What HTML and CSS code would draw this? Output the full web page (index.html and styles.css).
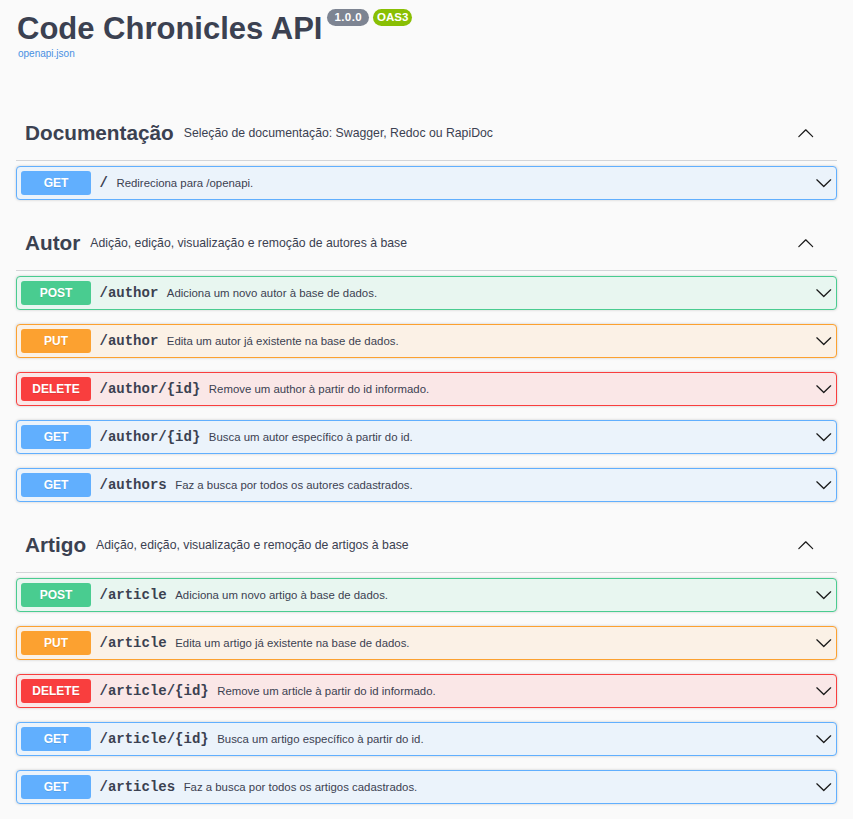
FILE: index.html
```html
<!DOCTYPE html>
<html lang="pt-BR">
<head>
<meta charset="utf-8">
<title>Code Chronicles API</title>
<link rel="stylesheet" href="styles.css">
</head>
<body>
<div class="page">
  <div class="info">
    <div class="title-row">
      <h1 class="title">Code Chronicles API</h1>
      <span class="badge badge-version">1.0.0</span>
      <span class="badge badge-oas">OAS3</span>
    </div>
    <a class="spec-link" href="#">openapi.json</a>
  </div>

  <section class="tag-section">
    <div class="tag-header">
      <div class="tag-text">
        <h3 class="tag-name">Documentação</h3>
        <span class="tag-desc">Seleção de documentação: Swagger, Redoc ou RapiDoc</span>
      </div>
      <svg class="arrow arrow-up" viewBox="0 0 20 20"><path d="M17.418 14.908c.272.268.709.268.979 0s.27-.701 0-.969l-7.908-7.83c-.27-.268-.707-.268-.979 0l-7.908 7.83c-.27.268-.27.701 0 .969.271.268.709.268.979 0L10 7.767l7.418 7.141z"/></svg>
    </div>
    <div class="opblock get">
      <span class="method">GET</span>
      <span class="path">/</span>
      <span class="summary">Redireciona para /openapi.</span>
      <svg class="arrow" viewBox="0 0 20 20"><path d="M17.418 6.109c.272-.268.709-.268.979 0s.271.701 0 .969l-7.908 7.83c-.27.268-.707.268-.979 0l-7.908-7.830c-.27-.268-.27-.701 0-.969.271-.268.709-.268.979 0L10 13.25l7.418-7.141z"/></svg>
    </div>
  </section>

  <section class="tag-section">
    <div class="tag-header">
      <div class="tag-text">
        <h3 class="tag-name">Autor</h3>
        <span class="tag-desc">Adição, edição, visualização e remoção de autores à base</span>
      </div>
      <svg class="arrow arrow-up" viewBox="0 0 20 20"><path d="M17.418 14.908c.272.268.709.268.979 0s.27-.701 0-.969l-7.908-7.83c-.27-.268-.707-.268-.979 0l-7.908 7.83c-.27.268-.27.701 0 .969.271.268.709.268.979 0L10 7.767l7.418 7.141z"/></svg>
    </div>
    <div class="opblock post">
      <span class="method">POST</span>
      <span class="path">/author</span>
      <span class="summary">Adiciona um novo autor à base de dados.</span>
      <svg class="arrow" viewBox="0 0 20 20"><path d="M17.418 6.109c.272-.268.709-.268.979 0s.271.701 0 .969l-7.908 7.83c-.27.268-.707.268-.979 0l-7.908-7.83c-.27-.268-.27-.701 0-.969.271-.268.709-.268.979 0L10 13.25l7.418-7.141z"/></svg>
    </div>
    <div class="opblock put">
      <span class="method">PUT</span>
      <span class="path">/author</span>
      <span class="summary">Edita um autor já existente na base de dados.</span>
      <svg class="arrow" viewBox="0 0 20 20"><path d="M17.418 6.109c.272-.268.709-.268.979 0s.271.701 0 .969l-7.908 7.83c-.27.268-.707.268-.979 0l-7.908-7.83c-.27-.268-.27-.701 0-.969.271-.268.709-.268.979 0L10 13.25l7.418-7.141z"/></svg>
    </div>
    <div class="opblock delete">
      <span class="method">DELETE</span>
      <span class="path">/author/{id}</span>
      <span class="summary">Remove um author à partir do id informado.</span>
      <svg class="arrow" viewBox="0 0 20 20"><path d="M17.418 6.109c.272-.268.709-.268.979 0s.271.701 0 .969l-7.908 7.83c-.27.268-.707.268-.979 0l-7.908-7.83c-.27-.268-.27-.701 0-.969.271-.268.709-.268.979 0L10 13.25l7.418-7.141z"/></svg>
    </div>
    <div class="opblock get">
      <span class="method">GET</span>
      <span class="path">/author/{id}</span>
      <span class="summary">Busca um autor específico à partir do id.</span>
      <svg class="arrow" viewBox="0 0 20 20"><path d="M17.418 6.109c.272-.268.709-.268.979 0s.271.701 0 .969l-7.908 7.83c-.27.268-.707.268-.979 0l-7.908-7.83c-.27-.268-.27-.701 0-.969.271-.268.709-.268.979 0L10 13.25l7.418-7.141z"/></svg>
    </div>
    <div class="opblock get">
      <span class="method">GET</span>
      <span class="path">/authors</span>
      <span class="summary">Faz a busca por todos os autores cadastrados.</span>
      <svg class="arrow" viewBox="0 0 20 20"><path d="M17.418 6.109c.272-.268.709-.268.979 0s.271.701 0 .969l-7.908 7.83c-.27.268-.707.268-.979 0l-7.908-7.83c-.27-.268-.27-.701 0-.969.271-.268.709-.268.979 0L10 13.25l7.418-7.141z"/></svg>
    </div>
  </section>

  <section class="tag-section">
    <div class="tag-header">
      <div class="tag-text">
        <h3 class="tag-name">Artigo</h3>
        <span class="tag-desc">Adição, edição, visualização e remoção de artigos à base</span>
      </div>
      <svg class="arrow arrow-up" viewBox="0 0 20 20"><path d="M17.418 14.908c.272.268.709.268.979 0s.27-.701 0-.969l-7.908-7.83c-.27-.268-.707-.268-.979 0l-7.908 7.83c-.27.268-.27.701 0 .969.271.268.709.268.979 0L10 7.767l7.418 7.141z"/></svg>
    </div>
    <div class="opblock post">
      <span class="method">POST</span>
      <span class="path">/article</span>
      <span class="summary">Adiciona um novo artigo à base de dados.</span>
      <svg class="arrow" viewBox="0 0 20 20"><path d="M17.418 6.109c.272-.268.709-.268.979 0s.271.701 0 .969l-7.908 7.83c-.27.268-.707.268-.979 0l-7.908-7.83c-.27-.268-.27-.701 0-.969.271-.268.709-.268.979 0L10 13.25l7.418-7.141z"/></svg>
    </div>
    <div class="opblock put">
      <span class="method">PUT</span>
      <span class="path">/article</span>
      <span class="summary">Edita um artigo já existente na base de dados.</span>
      <svg class="arrow" viewBox="0 0 20 20"><path d="M17.418 6.109c.272-.268.709-.268.979 0s.271.701 0 .969l-7.908 7.83c-.27.268-.707.268-.979 0l-7.908-7.83c-.27-.268-.27-.701 0-.969.271-.268.709-.268.979 0L10 13.25l7.418-7.141z"/></svg>
    </div>
    <div class="opblock delete">
      <span class="method">DELETE</span>
      <span class="path">/article/{id}</span>
      <span class="summary">Remove um article à partir do id informado.</span>
      <svg class="arrow" viewBox="0 0 20 20"><path d="M17.418 6.109c.272-.268.709-.268.979 0s.271.701 0 .969l-7.908 7.83c-.27.268-.707.268-.979 0l-7.908-7.83c-.27-.268-.27-.701 0-.969.271-.268.709-.268.979 0L10 13.25l7.418-7.141z"/></svg>
    </div>
    <div class="opblock get">
      <span class="method">GET</span>
      <span class="path">/article/{id}</span>
      <span class="summary">Busca um artigo específico à partir do id.</span>
      <svg class="arrow" viewBox="0 0 20 20"><path d="M17.418 6.109c.272-.268.709-.268.979 0s.271.701 0 .969l-7.908 7.83c-.27.268-.707.268-.979 0l-7.908-7.83c-.27-.268-.27-.701 0-.969.271-.268.709-.268.979 0L10 13.25l7.418-7.141z"/></svg>
    </div>
    <div class="opblock get">
      <span class="method">GET</span>
      <span class="path">/articles</span>
      <span class="summary">Faz a busca por todos os artigos cadastrados.</span>
      <svg class="arrow" viewBox="0 0 20 20"><path d="M17.418 6.109c.272-.268.709-.268.979 0s.271.701 0 .969l-7.908 7.83c-.27.268-.707.268-.979 0l-7.908-7.83c-.27-.268-.27-.701 0-.969.271-.268.709-.268.979 0L10 13.25l7.418-7.141z"/></svg>
    </div>
  </section>
</div>
</body>
</html>
```
FILE: styles.css
```css
* { box-sizing: border-box; }

html, body {
  margin: 0;
  background: #fafafa;
}

body {
  font-family: "Liberation Sans", Arial, sans-serif;
  color: #3b4151;
}

.page {
  padding: 0 16px;
}

.info {
  padding-top: 9px;
  margin-bottom: 44px;
}

.title-row {
  display: flex;
  align-items: flex-start;
}

.title {
  margin: 0;
  font-size: 31px;
  line-height: 39px;
  font-weight: 700;
  color: #3b4151;
  padding-left: 1px;
}

.badge {
  display: inline-block;
  height: 17px;
  line-height: 17px;
  border-radius: 57px;
  color: #fff;
  font-size: 11.5px;
  font-weight: 700;
  padding: 0 4px;
}

.badge-version {
  margin-left: 5px;
  background: #7d8492;
  padding: 0 7px;
  letter-spacing: 0.4px;
}

.badge-oas {
  margin-left: 4px;
  background: #89bf04;
}

.spec-link {
  display: block;
  margin-left: 2px;
  font-size: 10px;
  line-height: 12px;
  color: #4990e2;
  text-decoration: none;
}

.tag-header {
  display: flex;
  align-items: center;
  justify-content: space-between;
  height: 57px;
  padding: 1px 23px 0 9px;
  margin-bottom: 5px;
  border-bottom: 1px solid rgba(59, 65, 81, 0.2);
}

.tag-text {
  display: flex;
  align-items: center;
}

.tag-name {
  margin: 0;
  font-size: 20.75px;
  font-weight: 700;
  color: #3b4151;
}

.tag-desc {
  margin-left: 10px;
  font-size: 12.25px;
  color: #3b4151;
}

.arrow {
  width: 17.5px;
  height: 17.5px;
  flex: none;
  fill: #1a1a1a;
}

.opblock {
  display: flex;
  align-items: center;
  height: 34px;
  padding: 4px;
  margin-bottom: 14px;
  border: 1px solid #61affe;
  border-radius: 4px;
  box-shadow: 0 0 3px rgba(0, 0, 0, 0.19);
}

.opblock .method {
  flex: none;
  width: 70px;
  height: 24px;
  line-height: 24px;
  border-radius: 3px;
  text-align: center;
  color: #fff;
  font-size: 12px;
  font-weight: 700;
  text-shadow: 0 1px 0 rgba(0, 0, 0, 0.1);
}

.opblock .path {
  padding: 0 8.5px;
  font-family: "Liberation Mono", "Courier New", monospace;
  font-size: 14px;
  font-weight: 700;
  color: #3b4151;
}

.opblock .summary {
  flex: 1;
  font-size: 11.4px;
  color: #3b4151;
}

.opblock.get { background: #ebf3fb; border-color: #61affe; }
.opblock.get .method { background: #61affe; }

.opblock.post { background: #e8f6f0; border-color: #49cc90; }
.opblock.post .method { background: #49cc90; }

.opblock.put { background: #fbf1e6; border-color: #fca130; }
.opblock.put .method { background: #fca130; }

.opblock.delete { background: #fae7e7; border-color: #f93e3e; }
.opblock.delete .method { background: #f93e3e; }
```
